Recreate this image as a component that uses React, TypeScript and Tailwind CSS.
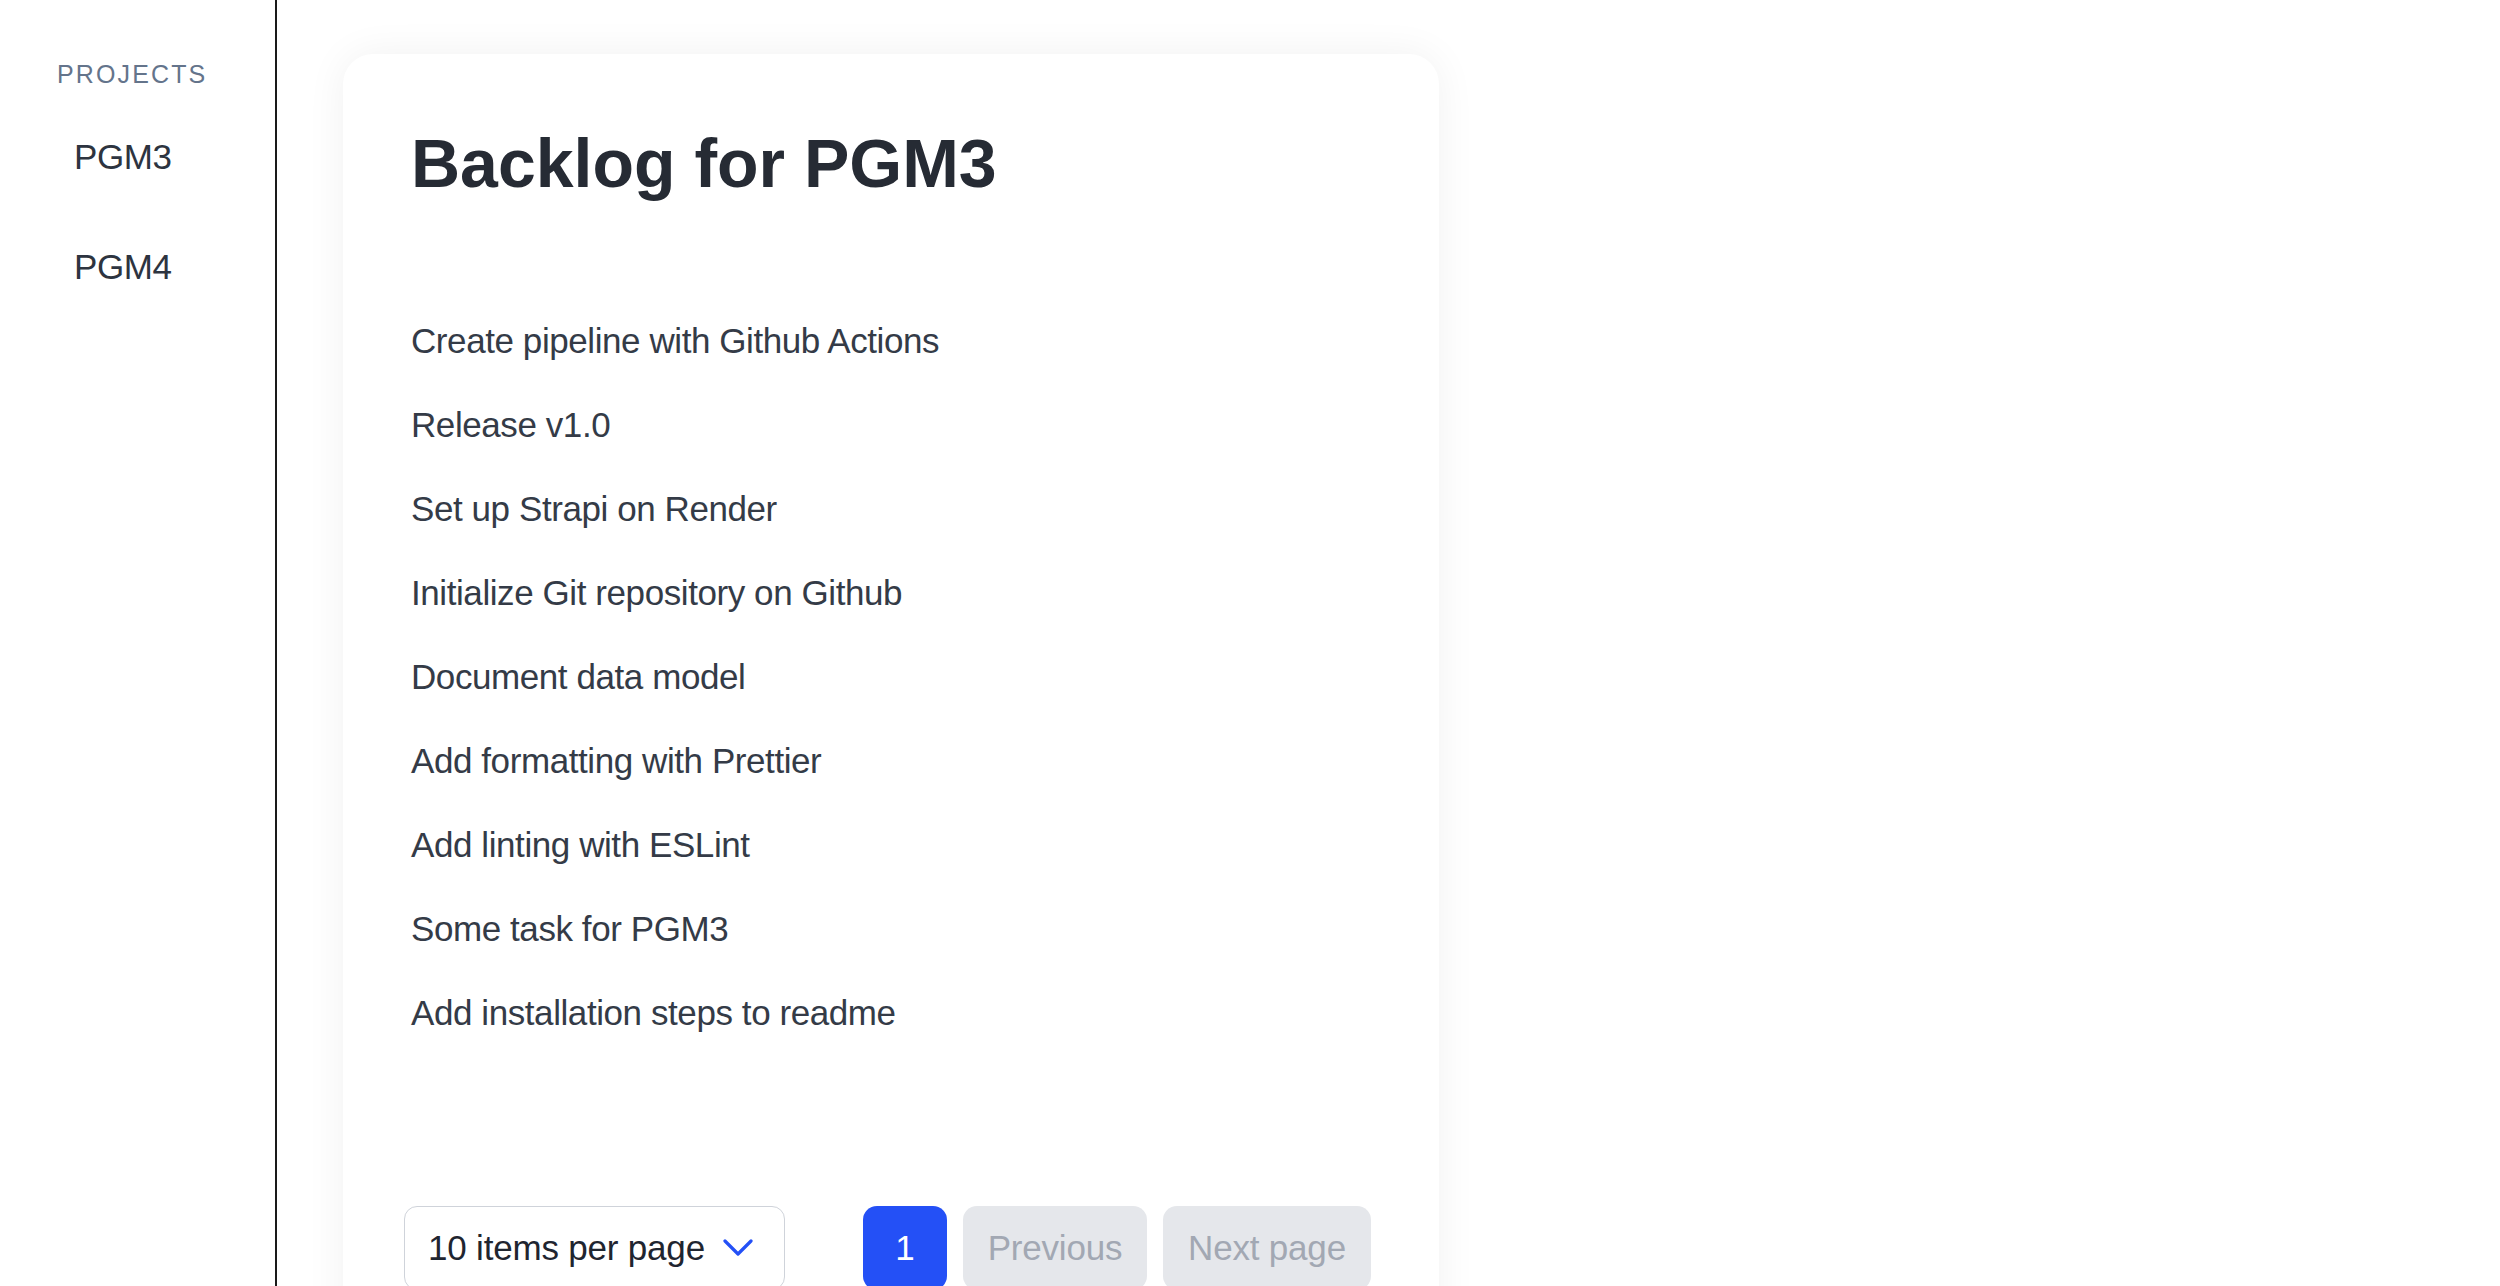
const tasks = [
  "Create pipeline with Github Actions",
  "Release v1.0",
  "Set up Strapi on Render",
  "Initialize Git repository on Github",
  "Document data model",
  "Add formatting with Prettier",
  "Add linting with ESLint",
  "Some task for PGM3",
  "Add installation steps to readme",
];

function Sidebar() {
  return (
    <aside className="w-[277px] shrink-0 border-r-2 border-[#1a1a1a] pl-[57px] pt-[62px] min-h-screen">
      <h2 className="text-[25px] leading-none tracking-[0.085em] text-[#64748b] uppercase">Projects</h2>
      <nav className="mt-[52px] flex flex-col gap-[75px] pl-[17px]">
        <a className="text-[35px] leading-none tracking-[-0.012em] text-[#2d3440]">PGM3</a>
        <a className="text-[35px] leading-none tracking-[-0.012em] text-[#2d3440]">PGM4</a>
      </nav>
    </aside>
  );
}

function ChevronDown() {
  return (
    <svg width="30" height="18" viewBox="0 0 30 18" fill="none">
      <polyline points="2,2 15,15 28,2" stroke="#2450f6" strokeWidth="3.2" strokeLinecap="round" strokeLinejoin="round" />
    </svg>
  );
}

function Pagination() {
  return (
    <div className="flex items-start -ml-[7px] tracking-[-0.012em]">
      <button className="h-[84px] w-[381px] flex items-center pl-[23px] pr-[31px] border border-[#cfd3da] rounded-[13px] bg-white text-[35px] text-[#1f2530]">
        <span className="flex-1 text-left">10 items per page</span>
        <ChevronDown />
      </button>
      <div className="ml-[78px] flex gap-[16px]">
        <button className="h-[84px] w-[84px] rounded-[14px] bg-[#2450f6] text-white text-[35px]">1</button>
        <button className="h-[84px] w-[184px] rounded-[14px] bg-[#e5e7eb] text-[#a2a8b3] text-[35px]">Previous</button>
        <button className="h-[84px] w-[208px] rounded-[14px] bg-[#e5e7eb] text-[#a2a8b3] text-[35px]">Next page</button>
      </div>
    </div>
  );
}

export default function App() {
  return (
    <div className="flex h-[1286px] overflow-hidden bg-white font-['Liberation_Sans',Arial,sans-serif]">
      <Sidebar />
      <main className="pl-[66px] pt-[54px]">
        <section className="w-[1096px] rounded-[30px] bg-white shadow-[0_0_40px_rgba(0,0,0,0.06)] pl-[68px] pr-[67px] pt-[75px] pb-[60px]">
          <h1 className="text-[68px] leading-none font-bold text-[#262b34]">Backlog for PGM3</h1>
          <ul className="mt-[102px]">
            {tasks.map((t) => (
              <li key={t} className="text-[35px] leading-[84px] tracking-[-0.012em] text-[#343b47]">
                {t}
              </li>
            ))}
          </ul>
          <div className="mt-[151px]">
            <Pagination />
          </div>
        </section>
      </main>
    </div>
  );
}
